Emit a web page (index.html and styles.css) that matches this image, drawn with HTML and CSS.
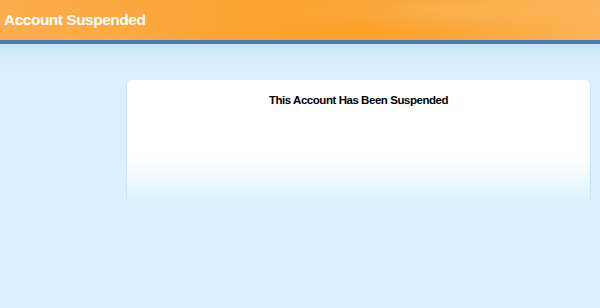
FILE: index.html
```html
<!DOCTYPE html>
<html lang="en">

<head>
    <meta charset="UTF-8">
    <meta name="viewport" content="width=device-width, initial-scale=1.0">
    <title>Account Suspended</title>
    <link rel="stylesheet" href="styles.css">
</head>

<body>
    <div class="header">
        <h1 class="header-title">Account Suspended</h1>
    </div>

    <div class="content">
        <div class="card">
            <h2 class="card-title">This Account Has Been Suspended</h2>
        </div>
    </div>
</body>

</html>
```
FILE: styles.css
```css
body {
    margin: 0;
    font-family: "Liberation Sans", Arial, sans-serif;
    background-color: #dcf1fd;
    color: #000;
    min-height: 308px;
}

.header {
    height: 40px;
    background:
        radial-gradient(ellipse 260px 30px at 430px 10px, rgba(255, 255, 255, 0.12), rgba(255, 255, 255, 0) 70%),
        radial-gradient(ellipse 220px 40px at 120px 55px, rgba(255, 220, 120, 0.25), rgba(255, 220, 120, 0) 70%),
        linear-gradient(to right, #fcad4e 0%, #f9a331 40%, #f9a027 60%, #fcb457 100%);
    border-bottom: 4px solid #4a7cae;
    display: flex;
    align-items: center;
}

.header-title {
    margin: 0 0 0 4px;
    font-size: 15.5px;
    font-weight: bold;
    color: #fff;
    letter-spacing: -0.5px;
}

.content {
    background: linear-gradient(to bottom, #c4e4f4 0px, #d6eefa 14px, #dcf1fd 28px);
    padding: 36px 10px 100px 127px;
}

.card {
    width: 463px;
    height: 120px;
    border-radius: 5px 5px 0 0;
    background: linear-gradient(to bottom, #fff 0px, #fff 78px, #eef8fe 100px, #dcf1fd 120px);
    box-shadow: 1px 0 0 rgba(160, 200, 225, 0.35), -1px 0 0 rgba(160, 200, 225, 0.35);
    padding-top: 14px;
    box-sizing: border-box;
}

.card-title {
    margin: 0;
    text-align: center;
    font-size: 11.5px;
    font-weight: bold;
    letter-spacing: -0.45px;
}
```
